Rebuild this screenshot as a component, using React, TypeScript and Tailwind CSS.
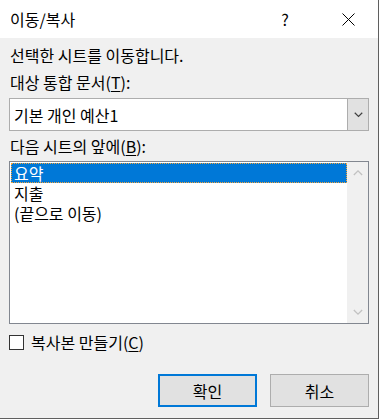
import { useState } from "react";

const FONT = "font-['Noto_Sans_CJK_KR','Noto_Sans',sans-serif]";

function Chevron({ up, className }: { up?: boolean; className?: string }) {
  return (
    <svg width="12" height="8" viewBox="0 0 12 8" className={className}>
      <path
        d={up ? "M1 7 L6 2 L11 7" : "M1 1 L6 6 L11 1"}
        fill="none"
        stroke="currentColor"
        strokeWidth="1.6"
      />
    </svg>
  );
}

export default function App() {
  const [selected, setSelected] = useState(0);
  const sheets = ["요약", "지출", "(끝으로 이동)"];

  return (
    <div
      className={`${FONT} w-[379px] h-[419px] bg-[#f0f0f0] border-r border-b border-[#5f5f5f] text-[16px] text-black flex flex-col overflow-hidden`}
    >
      {/* title bar */}
      <div className="h-[38px] bg-white flex items-center shrink-0">
        <span className="pl-[10px] flex-1 leading-none">이동/복사</span>
        <span className="w-[10px] text-center mr-[52px] text-[16px] leading-none">?</span>
        <svg width="13" height="13" viewBox="0 0 13 13" className="mr-[23px]">
          <path d="M0.5 0.5 L12.5 12.5 M12.5 0.5 L0.5 12.5" stroke="#000" strokeWidth="1" />
        </svg>
      </div>

      <div className="px-[9px] flex flex-col">
        <div className="h-[20px] leading-[20px] mt-[7px] pl-[1px]">선택한 시트를 이동합니다.</div>
        <div className="h-[20px] leading-[20px] mt-[7px] pl-[1px]">
          대상 통합 문서(<span className="underline underline-offset-2">T</span>):
        </div>

        {/* combobox */}
        <div className="mt-[6px] h-[33px] flex border border-[#adadad] bg-white">
          <div className="flex-1 flex items-center pl-[4px] leading-none">기본 개인 예산1</div>
          <div className="w-[21px] bg-[#e1e1e1] border-l border-[#adadad] flex items-center justify-center text-[#404040]">
            <Chevron className="w-[9px] h-[6px]" />
          </div>
        </div>

        <div className="h-[20px] leading-[20px] mt-[5px] pl-[1px]">
          다음 시트의 앞에(<span className="underline underline-offset-2">B</span>):
        </div>

        {/* listbox */}
        <div className="mt-[5px] h-[163px] flex border border-[#828790] bg-white">
          <div className="flex-1 p-[1px] pr-0">
            {sheets.map((s, i) => (
              <div
                key={s}
                onClick={() => setSelected(i)}
                className={`h-[20px] leading-[18px] pl-[2px] border ${
                  selected === i
                    ? "bg-[#0078d7] text-white border-dotted border-[#f4a43a]"
                    : "border-transparent"
                }`}
              >
                {s}
              </div>
            ))}
          </div>
          <div className="w-[21px] bg-[#f0f0f0] flex flex-col items-center justify-between py-[7px] text-[#c2c2c2]">
            <Chevron up className="w-[10px] h-[7px]" />
            <Chevron className="w-[10px] h-[7px]" />
          </div>
        </div>

        {/* checkbox */}
        <label className="mt-[10px] h-[16px] flex items-center gap-[7px]">
          <span className="w-[15px] h-[15px] border border-[#333] bg-white shrink-0" />
          <span className="leading-none">
            복사본 만들기(<span className="underline underline-offset-2">C</span>)
          </span>
        </label>

        {/* buttons */}
        <div className="mt-[24px] flex justify-end gap-[13px]">
          <button className="w-[99px] h-[33px] bg-[#e1e1e1] border-2 border-[#0078d7] leading-none">
            확인
          </button>
          <button className="w-[99px] h-[33px] bg-[#e1e1e1] border border-[#adadad] leading-none">
            취소
          </button>
        </div>
      </div>
    </div>
  );
}
